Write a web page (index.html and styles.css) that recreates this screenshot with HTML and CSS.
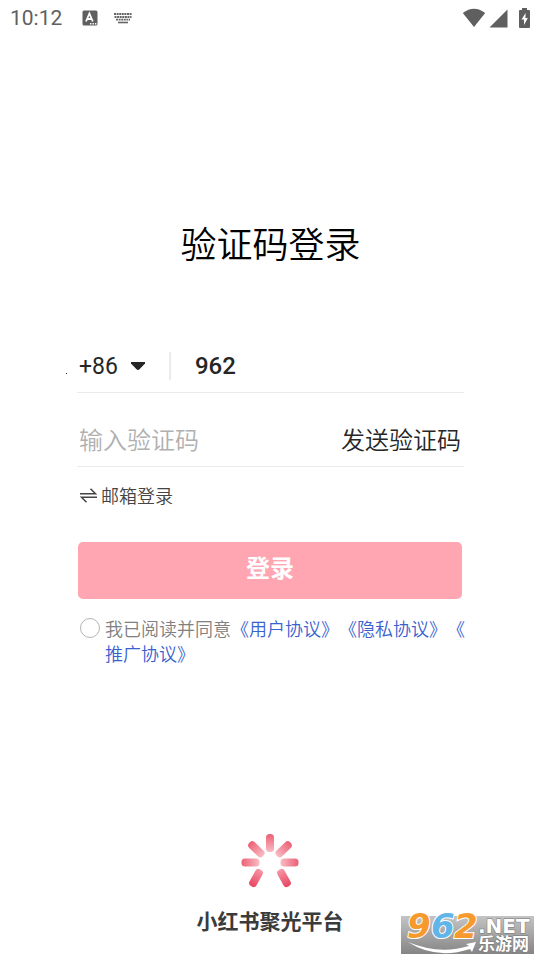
FILE: index.html
```html
<!DOCTYPE html>
<html lang="zh-CN">
<head>
<meta charset="utf-8">
<meta name="viewport" content="width=device-width, initial-scale=1">
<title>验证码登录</title>
<link rel="stylesheet" href="styles.css">
</head>
<body>
<div class="screen">
  <header class="status">
    <time class="clock">10:12</time>
    <svg class="input-icon" width="16" height="16" viewBox="0 0 16 16" aria-hidden="true">
      <rect x="0.5" y="0.5" width="15" height="15" rx="1.5" fill="#5f5f5f"/>
      <path d="M4 11.500 7.400 3.500 10.800 11.500M5.200 9H9.600" fill="none" stroke="#fff" stroke-width="1.8"/>
      <path d="M8 13h1.400v1.400H8zM10.500 13h1.400v1.400h-1.400zM13 13h1.400v1.400H13z" fill="#fff"/>
    </svg>
    <svg class="keyboard-icon" width="20" height="12" viewBox="0 0 20 12" aria-hidden="true" fill="none" stroke="#666">
      <path d="M1 2H19" stroke-width="2.200" stroke-dasharray="2 .6"/>
      <path d="M1.500 5H18.500" stroke-width="2.200" stroke-dasharray="2 .6"/>
      <path d="M3 7.700H17" stroke-width="1.800" stroke-dasharray="2 .6"/>
      <path d="M5 10.500H15" stroke-width="1.600"/>
    </svg>
    <span class="spacer"></span>
    <svg class="wifi" width="24" height="20" viewBox="0 0 24 20" aria-hidden="true"><path d="M.8 5Q12-3.600 23.200 5L12 19z" fill="#5f5f5f"/></svg>
    <svg class="signal" width="19" height="19" viewBox="0 0 19 19" aria-hidden="true"><path d="M18.500.5v18H.5z" fill="#5f5f5f"/></svg>
    <svg class="battery" width="11" height="20" viewBox="0 0 11 20" aria-hidden="true">
      <path d="M3 0h5v2h2q1 0 1 1v16q0 1-1 1H1q-1 0-1-1V3q0-1 1-1h2z" fill="#5f5f5f"/>
      <path d="M6.600 5 2.500 11.500H5V17L8.800 10H6.400z" fill="#fff"/>
    </svg>
  </header>

  <main class="content">
    <h1 class="title">验证码登录</h1>
    <form class="form">
      <div class="row phone-row">
        <span class="dot" aria-hidden="true"></span>
        <button class="country" type="button" aria-label="国家区号">+86
          <svg width="14" height="8" viewBox="0 0 14 8" aria-hidden="true"><path d="M0 0h14v1.500L8.500 7.200Q7 8.600 5.500 7.200L0 1.500z" fill="#262626"/></svg>
        </button>
        <input class="phone" type="tel" value="962" aria-label="手机号">
      </div>
      <div class="row code-row">
        <input class="code" type="text" placeholder="输入验证码" aria-label="验证码">
        <button class="send" type="button">发送验证码</button>
      </div>
      <a class="switch" href="#email">
        <svg width="17" height="16" viewBox="0 0 17 16" aria-hidden="true" fill="none" stroke="#444" stroke-width="1.500"><path d="M0 6.700H15.500L10.500 1.700M17 10.300H1.500L6.500 15.300"/></svg>
        邮箱登录</a>
      <button class="login" type="button">登录</button>
      <div class="agreement">
        <input class="agree" id="agree" type="checkbox">
        <p class="terms"><label for="agree">我已阅读并同意</label><a href="#user">《用户协议》</a><a href="#privacy">《隐私协议》</a><a href="#promotion">《推广协议》</a></p>
      </div>
    </form>
  </main>

  <footer class="brand">
    <svg width="60" height="56" viewBox="0 0 60 56" aria-hidden="true">
      <defs>
        <linearGradient id="ray" x1="0" y1="0" x2="0" y2="1"><stop stop-color="#ec5f75"/><stop offset="1" stop-color="#f9bdc4"/></linearGradient>
        <linearGradient id="ray-low" x1="0" y1="0" x2="0" y2="1"><stop stop-color="#e84463"/><stop offset="1" stop-color="#f598a6"/></linearGradient>
      </defs>
      <g fill="url(#ray)">
        <rect x="26" y="1" width="8" height="18" rx="3.500"/>
        <rect x="26" y="1" width="8" height="19" rx="3.500" transform="rotate(-46 30 29.500)"/>
        <rect x="26" y="1" width="8" height="19" rx="3.500" transform="rotate(46 30 29.500)"/>
        <rect x="26" y="1" width="8" height="18" rx="3.500" transform="rotate(-90 30 29.500)"/>
        <rect x="26" y="1" width="8" height="18" rx="3.500" transform="rotate(90 30 29.500)"/>
      </g>
      <g fill="url(#ray-low)">
        <rect x="12" y="35.500" width="8" height="19" rx="3.500" transform="rotate(209 16 45)"/>
        <rect x="40" y="35.500" width="8" height="19" rx="3.500" transform="rotate(151 44 45)"/>
      </g>
    </svg>
    <strong class="brand-name">小红书聚光平台</strong>
  </footer>

  <aside class="watermark" aria-label="962.NET 乐游网">
    <svg viewBox="0 0 133 42" width="133" height="42">
      <defs><linearGradient id="plate" x2="0" y2="1"><stop stop-color="#c4c4c4"/><stop offset="1" stop-color="#858585"/></linearGradient></defs>
      <path d="M0 4h133v38H0z" fill="url(#plate)"/>
      <path d="M7 30Q38 43 68 34L65 32 75 30 71 40 69 37Q35 48 7 30z" fill="#fff"/>
      <g class="mark-number"><text x="6" y="26" fill="#f79a2e">9</text><text x="30" y="26" fill="#62b5e8">6</text><text x="53" y="26" fill="#f79a2e">2</text></g>
      <text class="mark-net" x="77" y="21">.NET</text>
      <text class="mark-name" x="77" y="38">乐游网</text>
    </svg>
  </aside>
</div>
</body>
</html>
```
FILE: styles.css
```css
* { box-sizing: border-box; }
body {
  margin: 0;
  background: #fff;
  color: #262626;
  font-family: Roboto, "Noto Sans CJK SC", sans-serif;
}
button, input { font: inherit; color: inherit; border: 0; padding: 0; background: none; }
a { text-decoration: none; }
svg { display: block; flex: none; overflow: visible; }
.screen { position: relative; min-height: 100vh; display: flex; flex-direction: column; }
.status { display: flex; align-items: center; height: 36px; padding: 0 10px; }
.clock { font-size: 21px; color: #606060; }
.input-icon { margin-left: 20px; }
.keyboard-icon { margin-left: 15px; }
.spacer { flex: 1; }
.signal { margin-left: 3px; }
.battery { margin-left: 11px; }
.content { flex: 1; padding: 180px 76px 0 77px; }
.title { margin: 0; text-align: center; font-size: 36px; line-height: 52px; font-weight: 350; font-family: "Noto Sans CJK SC", sans-serif; color: #000; }
.form { margin-top: 72px; }
.row { display: flex; align-items: center; border-bottom: 1px solid #ebebeb; font-size: 24px; }
.phone-row { position: relative; height: 53px; }
.dot { position: absolute; left: -11px; top: 33px; width: 1px; height: 1px; background: #222; }
.country { display: flex; align-items: center; gap: 13px; padding: 0 24px 0 2px; height: 28px; font-size: 23px; border-right: 2px solid #ebebeb; }
.phone { flex: 1; min-width: 0; margin-left: 24px; font-weight: 500; }
.code-row { height: 74px; padding: 18px 3px 0 2px; font-family: "Noto Sans CJK SC", sans-serif; font-weight: 350; }
.code { flex: 1; min-width: 0; height: 36px; }
.code::placeholder { color: #b0b0b0; opacity: 1; }
.send { line-height: 36px; }
.switch { display: flex; align-items: center; gap: 4px; width: max-content; margin: 15px 0 0 3px; font-family: "Noto Sans CJK SC", sans-serif; font-size: 18px; font-weight: 350; line-height: 26px; color: #444; }
.login { display: block; width: calc(100% - 3px); height: 57px; margin: 34px 1px 0; padding-bottom: 8px; border-radius: 5px; background: #ffa6b2; color: #fff; font-size: 24px; font-weight: 700; }
.agreement { display: flex; gap: 5px; margin: 17px 0 0 3px; }
.agree { appearance: none; flex: none; width: 20px; height: 20px; margin: 2px 0 0; border: 1px solid #b5b5b5; border-radius: 50%; }
.terms { flex: 1; margin: 0 -2px 0 0; font-family: "Noto Sans CJK SC", sans-serif; font-size: 18px; line-height: 25px; font-weight: 350; color: #808080; line-break: anywhere; text-spacing-trim: space-all; }
.terms a { color: #3a62cf; }
.brand { display: flex; flex-direction: column; align-items: center; gap: 16px; padding-bottom: 21px; }
.brand-name { font-size: 21px; line-height: 34px; font-weight: 700; color: #3b3b3b; }
.watermark { position: absolute; right: 6px; bottom: 6px; }
.mark-number { font: italic 700 34px "DejaVu Sans", sans-serif; stroke: #fff; stroke-width: 2px; paint-order: stroke; }
.mark-net { font: 700 20px "DejaVu Sans", sans-serif; fill: #fff; stroke: #777; stroke-width: 1px; paint-order: stroke; }
.mark-name { font: 700 17px "Noto Sans CJK SC", sans-serif; fill: #fff; stroke: #777; stroke-width: 1px; paint-order: stroke; }
```
